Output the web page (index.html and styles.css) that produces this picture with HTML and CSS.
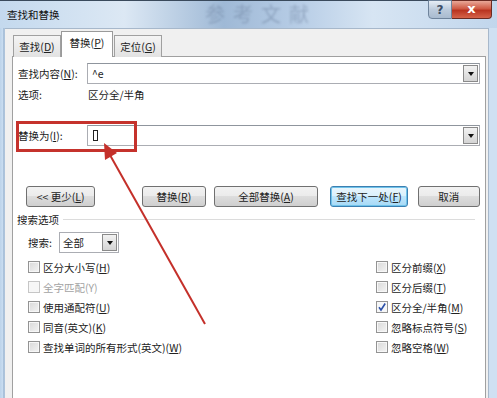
FILE: index.html
```html
<!DOCTYPE html>
<html lang="zh-CN">
<head>
<meta charset="utf-8">
<title>查找和替换</title>
<link rel="stylesheet" href="styles.css">
</head>
<body>
<div class="window">
  <div class="titlebar">
    <span class="title">查找和替换</span>
    <span class="watermark">参考文献</span>
    <div class="caption-btns">
      <span class="cap-help">?</span>
      <span class="cap-close">x</span>
    </div>
  </div>
  <div class="client">
    <div class="tabs">
      <span class="tab">查找(<u>D</u>)</span>
      <span class="tab active">替换(<u>P</u>)</span>
      <span class="tab">定位(<u>G</u>)</span>
    </div>
    <div class="panel">
      <div class="field-row">
        <span class="label">查找内容(<u>N</u>):</span>
        <div class="combo"><span class="combo-text">^e</span><span class="drop"><i class="tri"></i></span></div>
      </div>
      <div class="info-row">
        <span class="label">选项:</span>
        <span class="info-val">区分全/半角</span>
      </div>
      <div class="field-row replace-row">
        <span class="label">替换为(<u>I</u>):</span>
        <div class="combo"><span class="combo-text"><span class="caret-box"></span></span><span class="drop"><i class="tri"></i></span></div>
      </div>
      <div class="btn-row">
        <span class="btn b-less">&lt;&lt; 更少(<u>L</u>)</span>
        <span class="btn b-rep">替换(<u>R</u>)</span>
        <span class="btn b-all">全部替换(<u>A</u>)</span>
        <span class="btn b-next">查找下一处(<u>F</u>)</span>
        <span class="btn b-cancel">取消</span>
      </div>
      <div class="group-head"><span>搜索选项</span><i class="group-line"></i></div>
      <div class="search-row">
        <span class="search-label">搜索:</span>
        <div class="select"><span class="select-text">全部</span><span class="drop"><i class="tri"></i></span></div>
      </div>
      <div class="checks">
        <div class="col">
          <label class="chk"><i class="box"></i>区分大小写(<u>H</u>)</label>
          <label class="chk disabled"><i class="box"></i>全字匹配(Y)</label>
          <label class="chk"><i class="box"></i>使用通配符(<u>U</u>)</label>
          <label class="chk"><i class="box"></i>同音(英文)(<u>K</u>)</label>
          <label class="chk"><i class="box"></i>查找单词的所有形式(英文)(<u>W</u>)</label>
        </div>
        <div class="col">
          <label class="chk"><i class="box"></i>区分前缀(<u>X</u>)</label>
          <label class="chk"><i class="box"></i>区分后缀(<u>T</u>)</label>
          <label class="chk"><i class="box checked"><svg width="10" height="10" viewBox="0 0 10 10"><path d="M2 5.2 L4 8 L8.2 1.5" fill="none" stroke="#2b4fa8" stroke-width="1.6"/></svg></i>区分全/半角(<u>M</u>)</label>
          <label class="chk"><i class="box"></i>忽略标点符号(<u>S</u>)</label>
          <label class="chk"><i class="box"></i>忽略空格(<u>W</u>)</label>
        </div>
      </div>
    </div>
  </div>
  <div class="highlight"></div>
  <svg class="arrow" width="497" height="398" viewBox="0 0 497 398">
    <line x1="205" y1="323" x2="110" y2="154" stroke="#c4302a" stroke-width="2"/>
    <polygon points="104,142 105,159 117,152" fill="#c4302a"/>
  </svg>
</div>
</body>
</html>
```

FILE: styles.css
```css
* { box-sizing: border-box; }
html, body { margin: 0; padding: 0; }
body {
  width: 497px;
  height: 398px;
  overflow: hidden;
  font-family: "Noto Sans CJK SC", "Microsoft YaHei", sans-serif;
  font-size: 10.5px;
  color: #1a1a1a;
}
u { text-decoration: underline; text-underline-offset: 1px; }

.window {
  position: relative;
  width: 497px;
  height: 398px;
  display: flex;
  flex-direction: column;
  background: linear-gradient(90deg, #bcd3ea 0, #c9ddf1 3px, #8aa6c4 4px, #cfe0f2 5px, #cfe0f2 100%);
  border-top: 1px solid #3a4a5c;
}

.titlebar {
  position: relative;
  height: 27px;
  flex: none;
  display: flex;
  align-items: flex-start;
  background: linear-gradient(90deg, #c4d9ee 0%, #dce8f4 25%, #9fb9d6 45%, #b7cde6 60%, #d7e5f3 75%, #c1d6ec 100%);
}
.title {
  margin: 6px 0 0 7px;
  font-size: 10.5px;
  color: #111;
  position: relative;
  z-index: 1;
}
.watermark {
  position: absolute;
  left: 205px;
  top: 1px;
  height: 24px;
  line-height: 24px;
  font-family: "Noto Sans CJK SC", serif;
  font-size: 20px;
  letter-spacing: 8px;
  color: rgba(80, 100, 130, 0.32);
  filter: blur(1.2px);
}
.caption-btns {
  margin-left: auto;
  margin-right: 5px;
  display: flex;
  position: relative;
  z-index: 1;
  margin-top: -1px;
}
.cap-help {
  width: 24px;
  height: 19px;
  border: 1px solid #6f849c;
  border-radius: 0 0 0 4px;
  background: linear-gradient(#e7eef6, #bccbdc 50%, #a9bbcf);
  color: #3c4e66;
  font: bold 12px "DejaVu Sans", sans-serif;
  display: flex;
  align-items: center;
  justify-content: center;
}
.cap-close {
  width: 40px;
  height: 19px;
  border: 1px solid #6a2a22;
  border-left: none;
  border-radius: 0 0 4px 0;
  background: linear-gradient(#e9a898, #cf5a44 45%, #b93420 55%, #d5634a);
  color: #fff;
  font: bold 13px "DejaVu Sans", sans-serif;
  display: flex;
  align-items: center;
  justify-content: center;
  line-height: 1;
  padding-bottom: 2px;
}

.client {
  flex: 1;
  margin: 0 8px 0 5px;
  background: #f0f0f0;
  border-top: 1px solid #a7b8cb;
  border-right: 1px solid #a7b8cb;
  padding: 3px 2px 0 7px;
  display: flex;
  flex-direction: column;
}

.tabs {
  display: flex;
  height: 25px;
  align-items: flex-end;
  padding-left: 1px;
  position: relative;
  z-index: 1;
  margin-bottom: -1px;
}
.tab {
  height: 22px;
  width: 48px;
  padding: 0;
  border: 1px solid #a0a0a0;
  border-bottom: none;
  background: linear-gradient(#f4f4f4, #e2e2e2);
  display: flex;
  align-items: center;
  justify-content: center;
  white-space: nowrap;
  margin-right: -1px;
  color: #222;
}
.tab.active {
  height: 26px;
  width: 52px;
  background: #fff;
  border-color: #9a9a9a;
  margin: 0 1px 0 1px;
  padding-bottom: 4px;
}

.panel {
  flex: 1;
  background: #fff;
  border: 1px solid #a0a0a0;
  border-bottom: none;
  padding: 6px 5px 0 5px;
  display: flex;
  flex-direction: column;
}

.field-row {
  display: flex;
  align-items: center;
  height: 21px;
}
.label {
  width: 69px;
  flex: none;
  white-space: nowrap;
}
.combo {
  flex: 1;
  height: 21px;
  border: 1px solid #abadb3;
  border-top-color: #8f959d;
  display: flex;
  align-items: center;
  padding: 1px 1px 1px 4px;
}
.combo-text { flex: 1; display: flex; align-items: center; color: #222; }
.drop {
  width: 15px;
  height: 17px;
  border: 1px solid #8a8a8a;
  background: linear-gradient(#f2f2f2, #d4d4d4);
  display: flex;
  align-items: center;
  justify-content: center;
}
.tri {
  width: 0;
  height: 0;
  border-left: 3px solid transparent;
  border-right: 3px solid transparent;
  border-top: 4px solid #111;
}
.caret-box {
  display: inline-block;
  width: 5px;
  height: 11px;
  border: 1px solid #222;
  margin-left: 1px;
}

.info-row {
  display: flex;
  align-items: center;
  height: 21px;
}
.info-val { margin-left: 1px; }

.replace-row { margin-top: 20px; }

.btn-row {
  display: flex;
  margin-top: 40px;
  padding-left: 8px;
}
.btn {
  height: 21px;
  border: 1px solid #707070;
  border-radius: 3px;
  background: linear-gradient(#f2f2f2 0%, #ebebeb 49%, #dddddd 50%, #cfcfcf 100%);
  display: flex;
  align-items: center;
  justify-content: center;
  white-space: nowrap;
  color: #222;
}
.b-less { width: 70px; }
.b-rep { width: 64px; margin-left: 47px; }
.b-all { width: 106px; margin-left: 8px; }
.b-next {
  width: 78px;
  margin-left: 12px;
  border-color: #3c7fb1;
  box-shadow: inset 0 0 0 1px #6fc3ea;
  background: linear-gradient(#eaf6fd 0%, #d9f0fc 49%, #bee6fd 50%, #a7d9f5 100%);
}
.b-cancel { width: 63px; margin-left: 10px; }

.group-head {
  display: flex;
  align-items: center;
  height: 20px;
  margin-top: 2px;
  margin-left: -1px;
}
.group-line {
  flex: 1;
  height: 1px;
  background: #dcdcdc;
  margin: 0 5px 0 4px;
}

.search-row {
  display: flex;
  align-items: center;
  margin-top: 3px;
  padding-left: 10px;
}
.search-label { width: 31px; }
.select {
  width: 60px;
  height: 21px;
  border: 1px solid #abadb3;
  display: flex;
  align-items: center;
  padding: 1px 1px 1px 3px;
}
.select-text { flex: 1; }

.checks {
  display: grid;
  grid-template-columns: 348px 1fr;
  margin-top: 4px;
  padding-left: 10px;
}
.col { display: flex; flex-direction: column; }
.chk {
  height: 20px;
  display: flex;
  align-items: center;
  white-space: nowrap;
  color: #222;
}
.chk.disabled { color: #a3a3a3; }
.box {
  width: 12px;
  height: 12px;
  border: 1px solid #939393;
  background: linear-gradient(135deg, #d9d9d9, #f4f4f4);
  box-shadow: inset 0 0 0 1px #f7f7f7;
  margin-right: 3px;
  display: flex;
  align-items: center;
  justify-content: center;
}
.chk.disabled .box { border-color: #c6c6c6; background: #f6f6f6; }
.box.checked { background: #f4f6f8; }

.highlight {
  position: absolute;
  left: 16px;
  top: 120px;
  width: 121px;
  height: 31px;
  border: 3px solid #c5322c;
}
.arrow {
  position: absolute;
  left: 0;
  top: 0;
  pointer-events: none;
}
```
